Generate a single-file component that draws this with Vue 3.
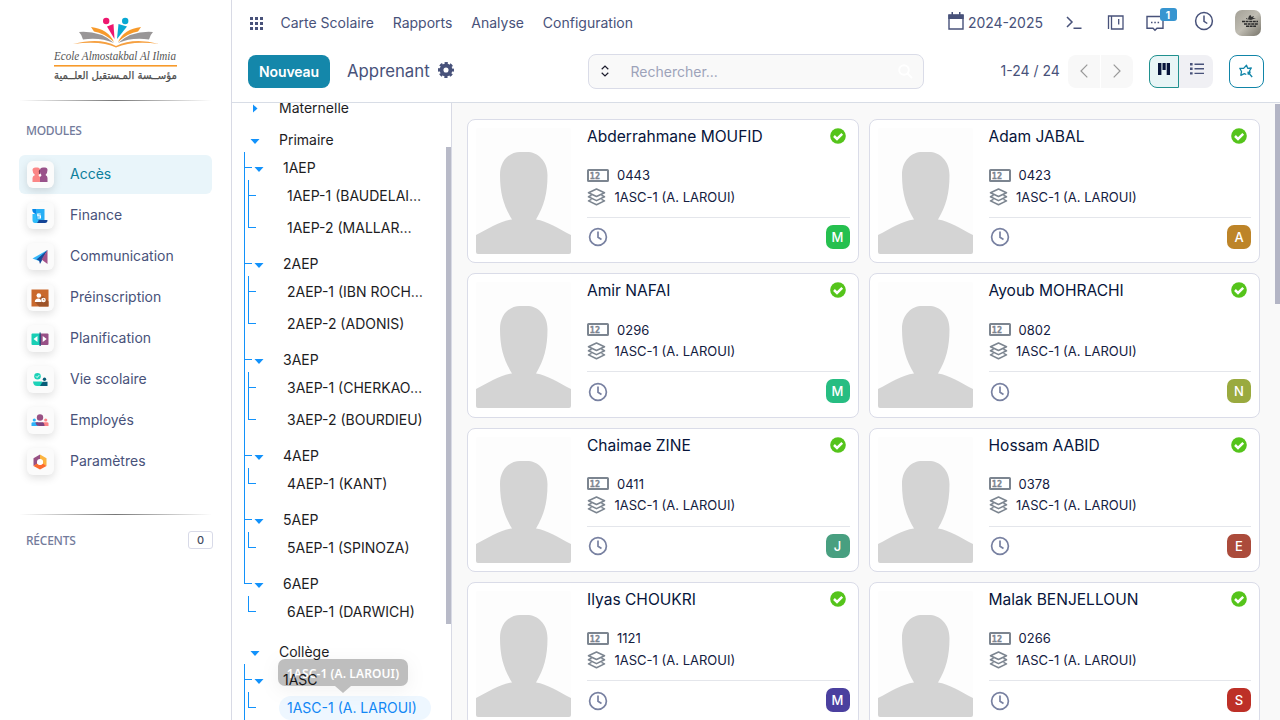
<script setup>
const modules = ['Accès', 'Finance', 'Communication', 'Préinscription', 'Planification', 'Vie scolaire', 'Employés', 'Paramètres']
const menus = ['Carte Scolaire', 'Rapports', 'Analyse', 'Configuration']
const tree = [
  { label: 'Maternelle', closed: true, children: [] },
  {
    label: 'Primaire',
    children: [
      { label: '1AEP', children: ['1AEP-1 (BAUDELAI…', '1AEP-2 (MALLAR…'] },
      { label: '2AEP', children: ['2AEP-1 (IBN ROCH…', '2AEP-2 (ADONIS)'] },
      { label: '3AEP', children: ['3AEP-1 (CHERKAO…', '3AEP-2 (BOURDIEU)'] },
      { label: '4AEP', children: ['4AEP-1 (KANT)'] },
      { label: '5AEP', children: ['5AEP-1 (SPINOZA)'] },
      { label: '6AEP', children: ['6AEP-1 (DARWICH)'] }
    ]
  },
  {
    label: 'Collège',
    open: true,
    children: [{ label: '1ASC', children: ['1ASC-1 (A. LAROUI)'] }]
  }
]
const selected = '1ASC-1 (A. LAROUI)'
const students = [
  { name: 'Abderrahmane MOUFID', code: '0443', tag: 'M', color: '#26c04f' },
  { name: 'Adam JABAL', code: '0423', tag: 'A', color: '#bd8428' },
  { name: 'Amir NAFAI', code: '0296', tag: 'M', color: '#27bd82' },
  { name: 'Ayoub MOHRACHI', code: '0802', tag: 'N', color: '#9aaa3f' },
  { name: 'Chaimae ZINE', code: '0411', tag: 'J', color: '#489f80' },
  { name: 'Hossam AABID', code: '0378', tag: 'E', color: '#ab4b3b' },
  { name: 'Ilyas CHOUKRI', code: '1121', tag: 'M', color: '#4b409f' },
  { name: 'Malak BENJELLOUN', code: '0266', tag: 'S', color: '#bd3027' }
]
</script>

<template>
  <div class="app">
    <aside class="side">
      <svg class="logo" viewBox="0 0 130 72" width="130" height="72">
        <path d="M21 32Q48 25 64 34Q82 25 107 32Q80 28.500 64 35.500Q50 28.500 21 32Z" fill="#f6a040" />
        <path d="M27 20Q48 18.500 62 31Q48 25 31 27.500Q30 23 27 20Z" fill="#999697" />
        <path d="M101 20Q80 18.500 66 31Q80 25 97 27.500Q98 23 101 20Z" fill="#999697" />
        <path d="M39 15Q56 17 62 30Q52 21 42 19.500Z" fill="#f79a2b" />
        <path d="M89 15Q72 17 66 30Q76 21 86 19.500Z" fill="#f79a2b" />
        <path d="M53 14L62 12L63.500 29Z M75 14L66 12L64.500 29Z" fill="#fff" />
        <circle cx="54.200" cy="9" r="3.200" fill="#ee176e" />
        <path d="M55 14.500L61.500 12L62.500 27Z" fill="#ee176e" />
        <circle cx="73.200" cy="9" r="3.200" fill="#08a8d3" />
        <path d="M75 14.500L66.500 12L65 27Z" fill="#08a8d3" />
        <text class="logo-latin" x="2" y="47.500" textLength="122" lengthAdjust="spacingAndGlyphs">Ecole Almostakbal Al Ilmia</text>
        <rect x="2" y="53" width="123" height="1.600" fill="#f79a2b" />
        <text class="logo-arabic" x="63.500" y="66.500" text-anchor="middle" direction="rtl" textLength="123" lengthAdjust="spacingAndGlyphs">مؤســسة المـستقبل العلــمية</text>
      </svg>
      <div class="rule"></div>
      <div class="heading first">MODULES</div>
      <nav class="modules">
        <div v-for="(m, i) in modules" :key="m" class="module" :class="{ active: i === 0 }">
          <span class="micon">
            <svg viewBox="0 0 18 18" width="18" height="18">
              <g v-if="i === 0">
                <path d="M1.500 4Q1.500 1.500 4.500 1.500H6.500Q9 1.500 9 4V6Q9 8 7.500 9L9 10V16H1.500V12Q1.500 10 4 9Q1.500 7 1.500 4Z" fill="#fb8686" />
                <path d="M9 4Q9 1.500 12 1.500H14Q16.500 1.500 16.500 4Q16.500 7 14.500 9Q16.500 10 16.500 12V16H9V10L10.500 9Q9 8 9 6Z" fill="#99528a" />
                <path d="M9 3.500Q7.800 4 7.800 5.500Q7.800 8 9 8.500Z" fill="#7b3b50" />
                <path d="M9 8L10.500 9.500L9 11L7.500 9.500Z" fill="#fff" />
              </g>
              <g v-else-if="i === 1">
                <path d="M1.500 2H13.500V13H4.500V6Q1.500 6 1.500 3Z" fill="#27aef5" />
                <path d="M1.500 2H5V7Q1.500 6 1.500 3Z" fill="#0784e8" />
                <path d="M1.500 7H5V16H4Q1.500 16 1.500 13Z" fill="#2ebcfa" />
                <path d="M4 13H16.500Q16.500 16 14 16H4Z" fill="#144496" />
                <path d="M4 12.500H7.500V14L6 16H4Z" fill="#2ebcfa" />
                <path d="M9.700 7H6.800V8.900H9.400V11H6.500" stroke="#fff" stroke-width="1.200" fill="none" />
              </g>
              <g v-else-if="i === 2">
                <path d="M1.500 10.500L16.500 2L8 13Z" fill="#35b6fa" />
                <path d="M5.500 11.500L16.500 2L9 16L8 12.500Z" fill="#164a9a" />
                <path d="M10.500 11.500L16.500 2V16Z" fill="#a1528a" />
              </g>
              <g v-else-if="i === 3">
                <rect x=".500" y=".500" width="17" height="17" fill="#c9692d" />
                <path d="M12 7L17.500 12.500V17.500H8L4 13Z" fill="#9e542a" />
                <circle cx="7.800" cy="6.500" r="2.300" fill="#fff" />
                <path d="M3.800 13Q3.800 9.500 7.500 9.500Q10 9.500 10.500 13Z" fill="#fff" />
                <circle cx="12.500" cy="11" r="2.300" fill="#fff" />
                <path d="M12.500 9.800V11H13.500" stroke="#b06030" stroke-width=".7" fill="none" />
              </g>
              <g v-else-if="i === 4">
                <rect x=".500" y="3.500" width="8.500" height="11.500" rx="1" fill="#19cfb5" />
                <rect x="9" y="3.500" width="8.500" height="11.500" rx="1" fill="#975086" />
                <rect x="8.500" y="2.500" width="1.200" height="13.500" fill="#114477" />
                <path d="M2.500 9L6.500 6V12Z M15.700 9L11.700 6V12Z" fill="#fff" />
              </g>
              <g v-else-if="i === 5">
                <circle cx="6.500" cy="5.300" r="3.300" fill="#1dd2b8" />
                <path d="M4.900 5.300L6.100 6.500L8.200 4.200" stroke="#fff" fill="none" />
                <path d="M2 10.500H11V15H6Q2.500 15 2 10.500Z" fill="#1dd2b8" />
                <circle cx="13.500" cy="8.200" r="1.700" fill="#075d78" />
                <path d="M9 15L11.500 10.700H16.500V15Z" fill="#075d78" />
              </g>
              <g v-else-if="i === 6">
                <circle cx="9" cy="5.500" r="3.200" fill="#985184" />
                <circle cx="3.300" cy="8" r="1.600" fill="#2ab2f9" />
                <circle cx="14.700" cy="8" r="1.600" fill="#fb8287" />
                <path d="M.5 11.500Q.5 10.200 2 10.200H7V14H.5Z" fill="#2ab2f9" />
                <path d="M11 10.200H16Q17.500 10.200 17.500 11.500V14H11Z" fill="#fb8287" />
                <path d="M4.500 10.200H11Q13.500 10.500 13.500 14H8Q5 14 4.500 10.200Z" fill="#7d4380" />
              </g>
              <g v-else>
                <path d="M9 1.500V6L6 9V11L2.500 13V5.200Z" fill="#985184" />
                <path d="M9 1.500L15.500 5.200V13L12 11V8L9 6Z" fill="#fbb441" />
                <path d="M2.500 13L6 10.500L9 12L12 10.500L15.500 13L9 16.500Z" fill="#fc6a2d" />
                <circle cx="9" cy="9" r="3" fill="#fff" />
              </g>
            </svg>
          </span>
          <span>{{ m }}</span>
        </div>
      </nav>
      <div class="rule"></div>
      <div class="heading recent"><span>RÉCENTS</span><span class="count">0</span></div>
    </aside>

    <div class="content">
      <header class="head">
        <div class="navbar">
          <svg class="grid" viewBox="0 0 13 13" width="13" height="13" fill="#48527a">
            <template v-for="r in 3" :key="r">
              <rect v-for="c in 3" :key="c" :x="(c - 1) * 5" :y="(r - 1) * 5" width="3" height="3" />
            </template>
          </svg>
          <span v-for="m in menus" :key="m" class="menu">{{ m }}</span>
          <div class="tools">
            <span class="year">
              <svg viewBox="0 0 16 18" width="16" height="18">
                <path d="M1 3.500H15V17H1Z" fill="none" stroke="#48527a" stroke-width="1.400" />
                <path d="M.3 2.300H15.700V7H.3Z M3.500 0H5V3H3.500Z M11 0H12.500V3H11Z" fill="#48527a" />
              </svg>
              2024-2025
            </span>
            <svg class="t-term" viewBox="0 0 16 14" width="16" height="14" fill="none" stroke="#48527a" stroke-width="1.500"><path d="M1 1L6 6L1 11M7.500 12.200H15.500" /></svg>
            <svg class="t-book" viewBox="0 0 17 15" width="17" height="15" fill="none" stroke="#48527a" stroke-width="1.300"><path d="M4.500 1H16V14H4.500ZM4 1H1.500V14M11.700 4V9.500" /></svg>
            <span class="t-msg">
              <svg viewBox="0 0 18 17" width="18" height="17" fill="none" stroke="#48527a" stroke-width="1.400"><path d="M1 1.500H17V13.200H11L9 15.300L7 13.200H1Z" /><path d="M5 7.500H6.500M8.300 7.500H9.800M11.600 7.500H13.100" stroke-width="1.600" /></svg>
              <b>1</b>
            </span>
            <svg class="t-clock" viewBox="0 0 20 20" width="20" height="20" fill="none" stroke="#48527a" stroke-width="1.500"><circle cx="10" cy="10" r="8.400" /><path d="M10 4.500V10.300L13.300 12.500" /></svg>
            <svg class="avatar" viewBox="0 0 26 26" width="26" height="26">
              <defs>
                <linearGradient id="wall" x1="0" y1="0" x2="1" y2="1"><stop offset="0" stop-color="#a3a096" /><stop offset=".5" stop-color="#c0bdb3" /><stop offset="1" stop-color="#77746a" /></linearGradient>
              </defs>
              <rect width="26" height="26" rx="7" fill="url(#wall)" />
              <path d="M11 8L13 9L14 6L15.500 5L16.500 7L19 6L18 8L21 8L16 10L11 9Z" fill="#333" />
              <path d="M7 11.500H23M9 14H23M11 16.300H21" stroke="#29292a" stroke-width="1.500" stroke-dasharray="3 .6" />
            </svg>
          </div>
        </div>
        <div class="control">
          <button class="new">Nouveau</button>
          <span class="title">Apprenant</span>
          <svg class="gear" viewBox="0 0 16 16" width="16" height="16">
            <circle cx="8" cy="8" r="4.500" fill="none" stroke="#48527a" stroke-width="3.900" />
            <circle cx="8" cy="8" r="6.900" fill="none" stroke="#48527a" stroke-width="2.200" stroke-dasharray="3.200 2.220" stroke-dashoffset="1.600" />
          </svg>
          <div class="search">
            <svg viewBox="0 0 8 12" width="8" height="12" fill="none" stroke="#1c1c2c" stroke-width="1.200"><path d="M.7 4.200L4 1L7.300 4.200M.7 7.800L4 11L7.300 7.800" /></svg>
            <span>Rechercher...</span>
            <svg class="mag" viewBox="0 0 15 15" width="15" height="15" fill="none" stroke="#fff" stroke-width="2"><circle cx="6" cy="6" r="4.800" /><path d="M9.500 9.500L14 14" /></svg>
          </div>
          <span class="pages">1-24 / 24</span>
          <div class="pager">
            <span><svg viewBox="0 0 8 14" width="8" height="14"><path d="M7.300 .7L1 7L7.300 13.300" /></svg></span>
            <span><svg viewBox="0 0 8 14" width="8" height="14"><path d="M.7 .7L7 7L.7 13.300" /></svg></span>
          </div>
          <div class="views">
            <span class="kanban"><svg viewBox="0 0 12 12" width="12" height="12" fill="#07153b"><path d="M0 0H3.400V12H0ZM4.500 0H7.700V7H4.500ZM8.700 0H12V12H8.700Z" /></svg></span>
            <span class="list"><svg viewBox="0 0 14 12" width="14" height="12" fill="#48527a"><path d="M0 0H2.600V2.400H0ZM0 4.600H2.600V7H0ZM0 9.200H2.600V11.600H0ZM4.500 .5H14V1.900H4.500ZM4.500 5.100H14V6.500H4.500ZM4.500 9.700H14V11.100H4.500Z" /></svg></span>
          </div>
          <span class="pin"><svg viewBox="0 0 14 14" width="14" height="14" fill="none" stroke="#1185a8" stroke-width="1.300" stroke-linejoin="round"><path d="M7.300 10.500L5.300 9.600L1.800 11.300L2.500 7.500L.8 4.300L4.600 4.400L7.500 1.300L8.700 4.300L12.300 4L10.500 7L11.300 8.700M9 8.200L13.200 13M9.300 10.800L9 8.200L11.500 8.900" /></svg></span>
        </div>
      </header>

      <div class="body">
        <div class="tree">
          <ul class="lv0">
            <li v-for="n in tree" :key="n.label">
              <div class="row"><i class="caret" :class="{ closed: n.closed }"></i><span>{{ n.label }}</span></div>
              <ul v-if="n.children.length" class="lv1">
                <li v-for="c in n.children" :key="c.label" :class="{ more: n.open }">
                  <div class="row"><i class="caret"></i><span>{{ c.label }}</span></div>
                  <ul class="lv2">
                    <li v-for="l in c.children" :key="l">
                      <div class="row leaf" :class="{ selected: l === selected }"><span>{{ l }}</span></div>
                      <div v-if="l === selected" class="tooltip">{{ l }}</div>
                    </li>
                  </ul>
                </li>
              </ul>
            </li>
          </ul>
          <div class="bar"></div>
        </div>

        <main class="cards">
          <article v-for="s in students" :key="s.name" class="card">
            <svg class="photo" viewBox="0 0 95 126" width="95" height="126">
              <rect width="95" height="126" rx="2" fill="#fdfdfd" />
              <path d="M24 47C24 32 34 24 44 24H51C61 24 71.500 32 71.500 47C71.500 66 68 78 60 91.500C71 93 83 101 95 107V124Q95 126 93 126H2Q0 126 0 124V107C12 101 24 93 36 91.500C28 78 24 66 24 47Z" fill="#d4d4d4" />
            </svg>
            <div class="info">
              <div class="name">
                <span>{{ s.name }}</span>
                <svg viewBox="0 0 16 16" width="16" height="16"><circle cx="8" cy="8" r="7.800" fill="#55c41b" /><path d="M4 8L7 10.900L12.200 5.800" fill="none" stroke="#fff" stroke-width="2.500" /></svg>
              </div>
              <div class="line code">
                <svg viewBox="0 0 22 13" width="22" height="13"><rect x="1" y="1" width="20" height="11" rx=".6" fill="none" stroke="#7c8590" stroke-width="2" /><text x="2.800" y="9.500" class="tw">12</text></svg>
                <span>{{ s.code }}</span>
              </div>
              <div class="line">
                <svg viewBox="0 0 19 18" width="19" height="18" fill="none" stroke="#7c8590" stroke-width="1.600" stroke-linejoin="round"><path d="M9.500 1L17.500 4.700L9.500 8.500L1.500 4.700ZM4.500 7.300L1.500 8.800L9.500 12.600L17.500 8.800L14.500 7.300M4.500 11.400L1.500 12.900L9.500 16.700L17.500 12.900L14.500 11.400" /></svg>
                <span>1ASC-1 (A. LAROUI)</span>
              </div>
              <div class="foot">
                <svg viewBox="0 0 20 20" width="20" height="20" fill="none" stroke="#7881a1" stroke-width="1.700"><circle cx="10" cy="10" r="8.400" /><path d="M10 4.500V10.300L13.500 12.500" /></svg>
                <span class="tag" :style="{ background: s.color }">{{ s.tag }}</span>
              </div>
            </div>
          </article>
          <div class="mainbar"></div>
        </main>
      </div>
    </div>
  </div>
</template>

<style>
body { margin: 0; overflow: hidden; background: #fff; }
</style>

<style scoped>
* { box-sizing: border-box; }
.app { display: flex; width: 1280px; height: 720px; overflow: hidden; font: 14px/20px Inter, sans-serif; color: #48527a; background: #fff; }
.app svg { display: block; flex: none; }
.side { width: 232px; height: 720px; border-right: 1px solid #d8dae5; padding-top: 12px; flex: none; }
.logo { margin: 0 0 16px 52px; overflow: visible; }
.logo-latin { font: italic 12px "Liberation Serif", serif; fill: #555; }
.logo-arabic { font: 11px "DejaVu Sans", sans-serif; fill: #4d4d4d; stroke: #4d4d4d; stroke-width: .25px; }
.rule { height: 1px; margin: 0 19px; background: linear-gradient(90deg, transparent, #777, transparent); }
.heading { font: 500 12px/20px "Noto Sans", sans-serif; color: #737b9b; padding-left: 26px; }
.first { margin-top: 20px; letter-spacing: -.3px; }
.modules { margin: 14px 19px 0; display: flex; flex-direction: column; gap: 2px; height: 359px; }
.module { height: 39px; flex: none; display: flex; align-items: center; padding-left: 8px; border-radius: 6px; gap: 16px; line-height: 20px; }
.module > span:last-child { margin-top: -1px; }
.module.active { background: #e9f5fa; color: #0d7f9c; }
.micon { width: 27px; height: 27px; border-radius: 6px; background: #fbfbfb; display: flex; align-items: center; justify-content: center; box-shadow: 0 3px 8px rgba(0, 0, 0, .13); }
.micon svg { margin-left: -1px; }
.recent { display: flex; align-items: center; justify-content: space-between; padding-right: 18px; margin-top: 15px; letter-spacing: -.25px; height: 20px; }
.recent span:first-child { margin-top: 1px; }
.count { width: 25px; height: 18px; border: 1px solid #d8dae8; border-radius: 3px; font: 500 11px/17px Inter, sans-serif; text-align: center; color: #444b60; }
.content { width: 1048px; display: flex; flex-direction: column; }
.head { height: 103px; flex: none; border-bottom: 1px solid #d8dde6; }
.navbar { height: 46px; display: flex; align-items: center; padding: 0 19px 0 18px; }
.grid { margin-right: 17.500px; }
.menu { margin-right: 18.900px; }
.tools { margin-left: auto; display: flex; align-items: center; }
.year { display: flex; align-items: center; gap: 4px; margin-right: 23px; }
.year svg { margin-top: -4px; }
.t-term { margin-right: 24.500px; }
.t-book { margin: -1px 22px 0 0; }
.t-msg { position: relative; margin-right: 30.500px; }
.t-msg b { position: absolute; left: 14px; top: -7px; width: 17px; height: 13px; background: #3795d0; color: #fff; border-radius: 3px; font: bold 10px/14px Inter, sans-serif; text-align: center; }
.t-clock { margin: -4px 21px 0 0; }
.control { height: 56px; display: flex; align-items: center; padding: 0 16px; margin-top: -3px; }
.new { width: 82px; height: 33px; border: 0; border-radius: 8px; background: #1487aa; color: #fff; font: 600 14px/33px Inter, sans-serif; padding: 0; letter-spacing: -.1px; }
.title { font-size: 16.800px; margin-left: 17px; }
.gear { margin: -2px 0 0 8px; }
.search { width: 336px; height: 35px; background: #f9f9f9; border: 1px solid #dadce8; border-radius: 8px; margin-left: auto; display: flex; align-items: center; padding: 0 10px 0 12px; color: #9da3ba; }
.search span { margin: 2px 0 0 21.500px; }
.mag { margin-left: auto; }
.pages { margin-left: 76.500px; width: 59.500px; white-space: nowrap; }
.pager { margin-left: 8px; display: flex; gap: 1px; }
.pager span { width: 32px; height: 33px; background: #f8f8f8; display: flex; align-items: center; justify-content: center; }
.pager span:first-child { border-radius: 8px 0 0 8px; }
.pager span:last-child { border-radius: 0 8px 8px 0; }
.pager svg { fill: none; stroke: #999; stroke-width: 1.2; }
.views { display: flex; margin-left: 16px; }
.views span { height: 33px; display: flex; align-items: center; justify-content: center; padding-bottom: 4px; }
.kanban { width: 30px; border: 1px solid #20918f; border-radius: 8px 0 0 8px; background: #e8f5f6; }
.list { width: 34px; background: #f0f0f4; border-radius: 0 8px 8px 0; }
.list svg { margin-left: 2px; }
.pin { width: 35px; height: 33px; border: 1px solid #1185a8; border-radius: 8px; margin-left: 16px; display: flex; align-items: center; justify-content: center; }
.pin svg { margin-left: -1px; }
.body { display: flex; height: 617px; }
.tree { position: relative; width: 220px; height: 617px; overflow: hidden; border-right: 1px solid #d8dae5; flex: none; color: #1d1d1f; }
ul { list-style: none; margin: 0; padding: 0; }
.lv0 { margin-top: -11px; padding-left: 8px; }
li { position: relative; padding: 4px 0; }
.lv1, .lv2 { margin-left: 4px; }
.row { height: 24px; display: flex; align-items: center; padding-left: 39px; position: relative; white-space: nowrap; }
.lv1 > li::before, .lv2 > li::before { content: ""; position: absolute; left: 0; top: 0; bottom: 0; width: 1px; background: #1292fb; }
.lv1 > li:last-child:not(.more)::before, .lv2 > li:last-child::before { bottom: auto; height: 16px; }
.lv1 > li::after, .lv2 > li::after { content: ""; position: absolute; left: 0; top: 15px; width: 8px; height: 1px; background: #1292fb; }
.caret { position: absolute; left: 10px; top: 11px; width: 10px; height: 5px; background: #1292fb; clip-path: polygon(5% 0, 95% 0, 50% 100%); }
.caret.closed { left: 12.500px; top: 8px; width: 5px; height: 9px; clip-path: polygon(0 0, 100% 50%, 0 100%); }
.leaf.selected { margin-left: 31px; padding-left: 8px; width: 152px; border-radius: 12px; background: #eef7ff; color: #1287f5; }
.tooltip { position: absolute; left: 30px; top: -33px; width: 130px; height: 27px; border-radius: 7px; background: #000; color: #fff; opacity: .25; font: 600 12px/30px "Noto Sans", sans-serif; letter-spacing: .1px; text-align: center; white-space: nowrap; box-shadow: 0 4px 16px rgba(0, 0, 0, .2); }
.tooltip::after { content: ""; position: absolute; left: 57px; top: 27px; border: 8px solid transparent; border-top: 7px solid #000; border-bottom: 0; }
.bar { position: absolute; right: 0; top: 44px; width: 5px; height: 477px; background: #b8bac8; }
.cards { position: relative; width: 828px; height: 617px; background: #f9f9f9; padding: 16px 20px 0 15px; display: grid; grid-template-columns: 1fr 1fr; grid-auto-rows: 144.400px; gap: 10px; overflow: hidden; }
.mainbar { position: absolute; right: 0; top: 1px; width: 5px; height: 200px; background: #b3b5c5; }
.card { background: #fff; border: 1px solid #dadce8; border-radius: 8px; display: flex; padding: 8px; gap: 16px; }
.info { flex: 1; display: flex; flex-direction: column; }
.name { display: flex; justify-content: space-between; align-items: center; height: 17px; font-size: 15.550px; color: #07153b; padding-right: 4px; }
.name span { position: relative; top: .25px; }
.name svg { margin-top: -1px; }
.line { display: flex; align-items: center; height: 21px; font-size: 13px; color: #14203f; gap: 8.500px; }
.line.code { margin-top: 19.200px; height: 22px; gap: 8px; }
.tw { font: bold 8.500px "DejaVu Sans Mono", monospace; fill: #7c8590; stroke: #7c8590; stroke-width: .3px; }
.foot { border-top: 1px solid #e4e6eb; margin-top: 9.800px; padding: 7px 0 0 1px; display: flex; align-items: center; justify-content: space-between; }
.foot svg { margin-top: 1px; }
.tag { width: 24px; height: 24px; border-radius: 7px; color: #fff; text-align: center; line-height: 25px; font-size: 13px; font-weight: 500; }
</style>
